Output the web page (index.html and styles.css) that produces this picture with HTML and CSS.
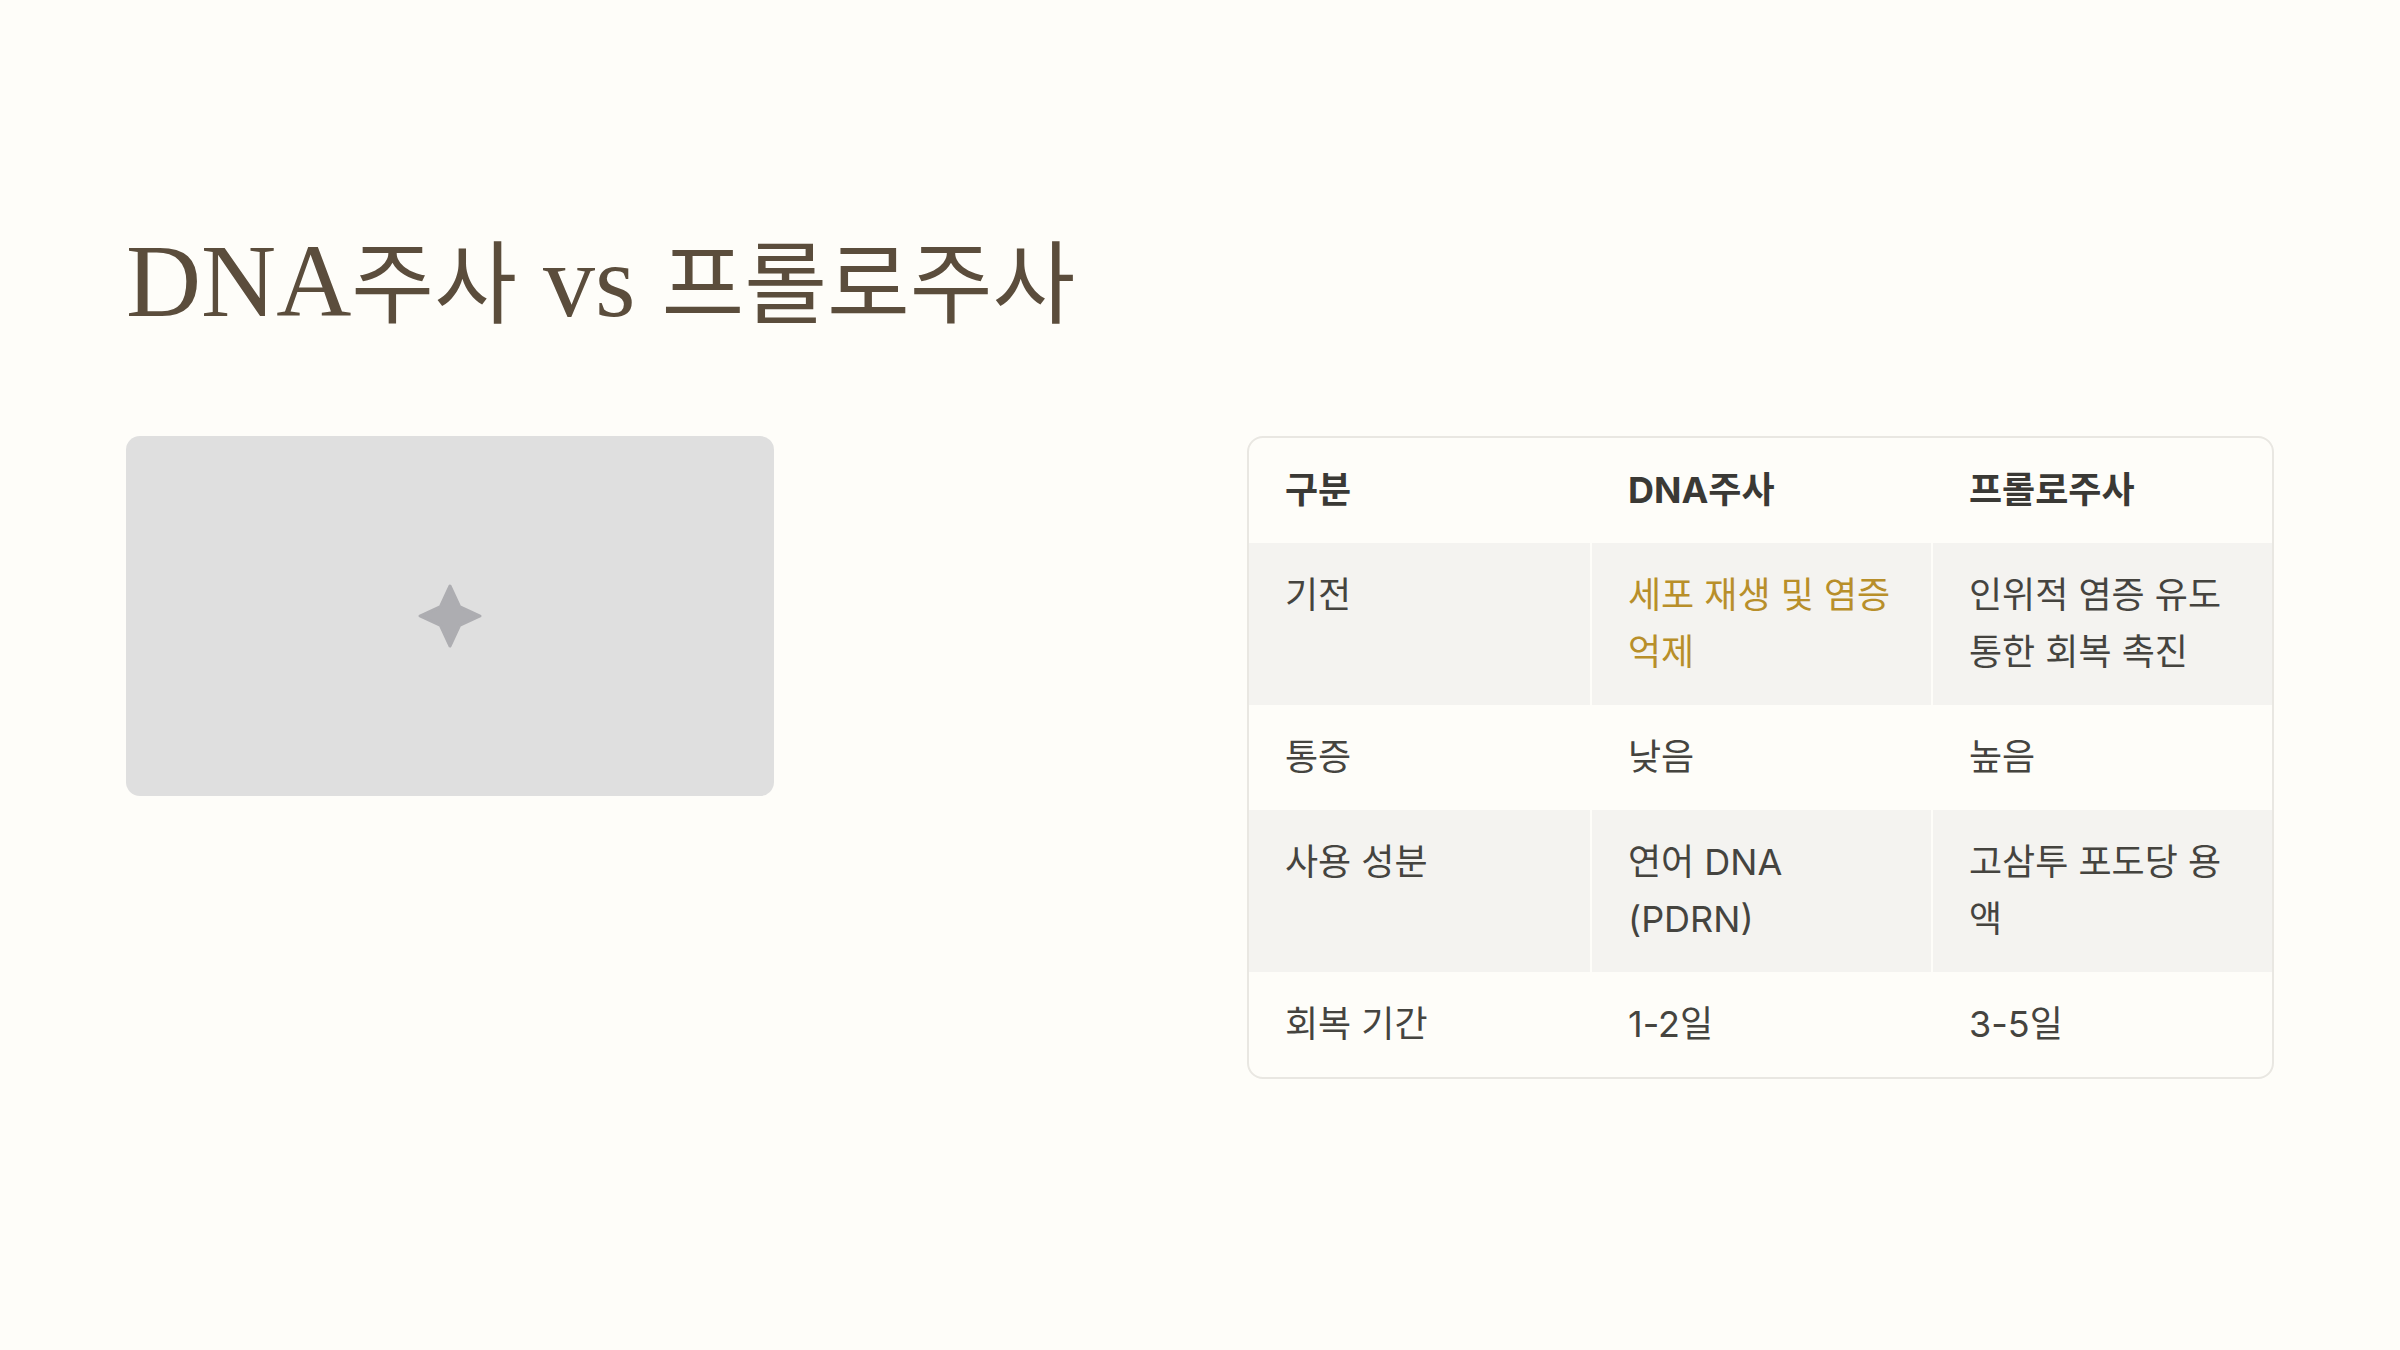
FILE: index.html
```html
<!DOCTYPE html>
<html lang="ko">
<head>
<meta charset="utf-8">
<title>DNA주사 vs 프롤로주사</title>
<link rel="stylesheet" href="styles.css">
</head>
<body>
<main class="slide">
  <h1 class="title">DNA<span class="ko">주사</span> vs <span class="ko">프롤로주사</span></h1>
  <div class="content">
    <div class="media">
      <div class="placeholder">
        <svg class="sparkle" viewBox="0 0 64 64" width="64" height="64" aria-hidden="true">
          <path d="M32 2 L41.5 22.5 L62 32 L41.5 41.5 L32 62 L22.5 41.5 L2 32 L22.5 22.5 Z" fill="#adadb1" stroke="#adadb1" stroke-width="3" stroke-linejoin="round"/>
        </svg>
      </div>
    </div>
    <div class="table-wrap">
      <table class="compare">
        <thead>
          <tr><th>구분</th><th>DNA주사</th><th>프롤로주사</th></tr>
        </thead>
        <tbody>
          <tr class="alt"><td>기전</td><td class="accent">세포 재생 및 염증 억제</td><td>인위적 염증 유도 통한 회복 촉진</td></tr>
          <tr><td>통증</td><td>낮음</td><td>높음</td></tr>
          <tr class="alt"><td>사용 성분</td><td>연어 DNA (PDRN)</td><td>고삼투 포도당 용액</td></tr>
          <tr><td>회복 기간</td><td>1-2일</td><td>3-5일</td></tr>
        </tbody>
      </table>
    </div>
  </div>
</main>
</body>
</html>
```

FILE: styles.css
```css
html, body {
  margin: 0;
  padding: 0;
  background: #fefdf9;
}

.slide {
  width: 2400px;
  height: 1350px;
  box-sizing: border-box;
  padding: 219px 126px 0;
}

.title {
  margin: 0 0 92px;
  font-family: "Liberation Serif", "Noto Sans CJK KR", serif;
  font-weight: 400;
  font-size: 104px;
  line-height: 1.2;
  color: #5b4d3c;
  white-space: nowrap;
}

.title .ko {
  font-family: "Noto Sans CJK KR", sans-serif;
  font-size: 90px;
  letter-spacing: 0;
}

.content {
  display: grid;
  grid-template-columns: 1fr 1fr;
  column-gap: 94px;
  align-items: start;
}

.placeholder {
  width: 648px;
  height: 360px;
  background: #dfdfdf;
  border-radius: 14px;
  display: flex;
  align-items: center;
  justify-content: center;
}

.sparkle {
  display: block;
}

.table-wrap {
  border: 2px solid #e9e7e2;
  border-radius: 16px;
  overflow: hidden;
  background: #fefdf9;
}

.compare {
  width: 100%;
  border-collapse: separate;
  border-spacing: 0;
  table-layout: fixed;
  font-family: "Inter", "Noto Sans CJK KR", sans-serif;
  font-size: 36px;
  letter-spacing: 0;
  line-height: 57px;
  color: #45443f;
}

.compare th,
.compare td {
  text-align: left;
  vertical-align: top;
  padding: 24px 36px;
}

.compare th + th,
.compare td + td {
  border-left: 2px solid #fefdf9;
}

.compare th {
  font-weight: 700;
  color: #3a3935;
}

.compare td {
  font-weight: 400;
}

.compare tr.alt td {
  background: #f4f3f0;
}

.compare .accent {
  color: #b88f2a;
}
```
